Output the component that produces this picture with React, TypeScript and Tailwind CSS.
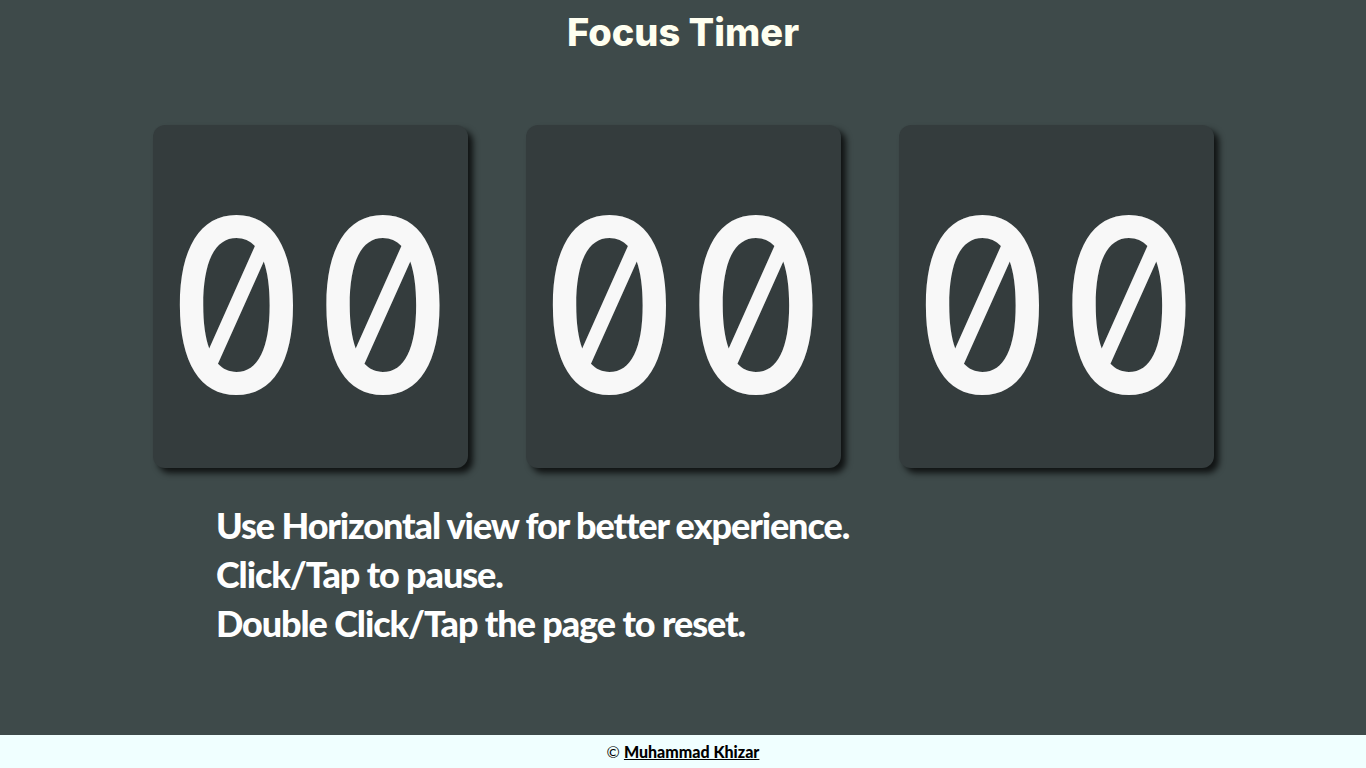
import React from "react";

function Card() {
  return (
    <div className="w-[315px] h-[343px] rounded-[12px] bg-[#343c3d] shadow-[5px_5px_6px_rgba(0,0,0,0.75)] flex items-center justify-center">
      <div
        className="flex gap-[8px] pt-[16px] text-[#f8f8f8] text-[242px] leading-none font-medium slashed-zero tabular-nums scale-x-[0.89]"
        style={{ fontFamily: 'Inter, "DejaVu Sans Mono", monospace' }}
      >
        <span>0</span>
        <span>0</span>
      </div>
    </div>
  );
}

export default function App() {
  return (
    <div className="w-full h-[768px] bg-[#3e4a4a] flex flex-col">
      <h1
        className="text-center text-[#fffff0] text-[38px] font-extrabold pt-[8px] leading-[48px]"
        style={{ fontFamily: 'Inter, "Noto Sans", sans-serif' }}
      >
        Focus Timer
      </h1>
      <div className="flex justify-center gap-[58px] mt-[69px]">
        <Card />
        <Card />
        <Card />
      </div>
      <div
        className="ml-[216px] mt-[33px] text-white text-[36px] font-black leading-[49px] tracking-[-1.1px]"
        style={{ fontFamily: 'Lato, "DejaVu Sans", sans-serif' }}
      >
        <p>Use Horizontal view for better experience.</p>
        <p>Click/Tap to pause.</p>
        <p>Double Click/Tap the page to reset.</p>
      </div>
      <div className="flex-1" />
      <footer
        className="h-[33px] bg-[#f0ffff] flex items-center justify-center text-black text-[16px] font-black"
        style={{ fontFamily: 'Lato, "DejaVu Sans", sans-serif' }}
      >
        <span className="font-normal mr-[4px]">©</span>
        <a className="underline" href="#">Muhammad Khizar</a>
      </footer>
    </div>
  );
}
